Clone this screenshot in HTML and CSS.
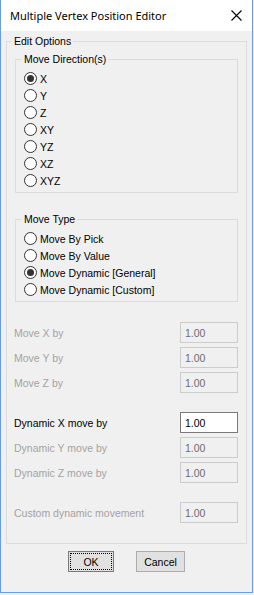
FILE: index.html
```html
<!DOCTYPE html>
<html lang="en">
<head>
    <meta charset="UTF-8">
    <title>Multiple Vertex Position Editor</title>
    <link rel="stylesheet" href="styles.css">
</head>
<body>
    <div class="window">
        <div class="titlebar">
            <span class="title">Multiple Vertex Position Editor</span>
            <svg class="close" width="11" height="11" viewBox="0 0 11 11">
                <path d="M0.5 0.5 L10.5 10.5 M10.5 0.5 L0.5 10.5" stroke="#000" stroke-width="1.1" fill="none"/>
            </svg>
        </div>
        <div class="client">
            <fieldset class="group outer">
                <legend>Edit Options</legend>

                <fieldset class="group inner">
                    <legend>Move Direction(s)</legend>
                    <div class="radio"><span class="circle checked"></span>X</div>
                    <div class="radio"><span class="circle"></span>Y</div>
                    <div class="radio"><span class="circle"></span>Z</div>
                    <div class="radio"><span class="circle"></span>XY</div>
                    <div class="radio"><span class="circle"></span>YZ</div>
                    <div class="radio"><span class="circle"></span>XZ</div>
                    <div class="radio"><span class="circle"></span>XYZ</div>
                </fieldset>

                <fieldset class="group inner types">
                    <legend>Move Type</legend>
                    <div class="radio"><span class="circle"></span>Move By Pick</div>
                    <div class="radio"><span class="circle"></span>Move By Value</div>
                    <div class="radio"><span class="circle checked"></span>Move Dynamic [General]</div>
                    <div class="radio"><span class="circle"></span>Move Dynamic [Custom]</div>
                </fieldset>

                <div class="fields">
                    <div class="field disabled"><label>Move X by</label><input type="text" value="1.00" disabled></div>
                    <div class="field disabled"><label>Move Y by</label><input type="text" value="1.00" disabled></div>
                    <div class="field disabled"><label>Move Z by</label><input type="text" value="1.00" disabled></div>

                    <div class="field spaced"><label>Dynamic X move by</label><input type="text" value="1.00"></div>
                    <div class="field disabled"><label>Dynamic Y move by</label><input type="text" value="1.00" disabled></div>
                    <div class="field disabled"><label>Dynamic Z move by</label><input type="text" value="1.00" disabled></div>

                    <div class="field disabled spaced"><label>Custom dynamic movement</label><input type="text" value="1.00" disabled></div>
                </div>
            </fieldset>

            <div class="buttons">
                <button class="btn ok">OK</button>
                <button class="btn cancel">Cancel</button>
            </div>
        </div>
    </div>
</body>
</html>
```

FILE: styles.css
```css
body {
    margin: 0;
    background-color: #f0f0f0;
    font-family: "Liberation Sans", Arial, sans-serif;
    font-size: 10.5px;
    color: #000;
}
.window {
    width: 251px;
    height: 592px;
    border-left: 1px solid #6a9be6;
    border-right: 1px solid #6a9be6;
    border-bottom: 1px solid #6a9be6;
    background-color: #f0f0f0;
    display: flex;
    flex-direction: column;
}
.titlebar {
    height: 31px;
    background-color: #fff;
    display: flex;
    align-items: center;
    padding-left: 9px;
}
.title {
    font-family: "Noto Sans", sans-serif;
    font-size: 11px;
}
.close {
    margin-left: auto;
    margin-right: 10px;
}
.client {
    padding: 4px 5px 0 5px;
}
fieldset {
    border: 1px solid #dcdcdc;
    margin: 0;
    min-width: 0;
}
legend {
    padding: 0 2px;
    line-height: 13px;
}
.outer {
    padding: 0 8px 20px 5px;
}
.inner {
    margin: 5px 0 0 3px;
    padding: 4px 0 3px 6px;
}
.inner.types {
    margin-top: 20px;
}
.radio {
    display: flex;
    align-items: center;
    height: 17px;
    margin-left: 2px;
}
.circle {
    width: 11px;
    height: 11px;
    border: 1px solid #333;
    border-radius: 50%;
    background-color: #fff;
    margin-right: 3px;
    display: flex;
    align-items: center;
    justify-content: center;
}
.circle.checked::after {
    content: "";
    width: 7px;
    height: 7px;
    border-radius: 50%;
    background-color: #333;
}
.fields {
    margin: 20px 0 0 2px;
    display: flex;
    flex-direction: column;
    gap: 4px;
}
.field {
    display: flex;
    align-items: center;
    justify-content: space-between;
    height: 21px;
}
.field.spaced {
    margin-top: 15px;
}
.field input {
    width: 58px;
    height: 21px;
    box-sizing: border-box;
    margin: 0;
    padding: 0 4px;
    border: 1px solid #7a7a7a;
    background-color: #fff;
    font: inherit;
    color: #000;
}
.field.disabled label {
    color: #a3a3a3;
}
.field.disabled input {
    border-color: #cccccc;
    background-color: #f0f0f0;
    color: #6d6d6d;
}
.buttons {
    display: flex;
    justify-content: center;
    gap: 22px;
    margin-top: 7px;
}
.btn {
    height: 21px;
    padding: 0;
    border: 1px solid #adadad;
    background-color: #e1e1e1;
    font: inherit;
    color: #000;
    position: relative;
}
.btn.ok {
    width: 46px;
    border-color: #7a7a7a;
}
.btn.ok::after {
    content: "";
    position: absolute;
    inset: 1px;
    border: 1px dotted #000;
}
.btn.cancel {
    width: 49px;
}
```
